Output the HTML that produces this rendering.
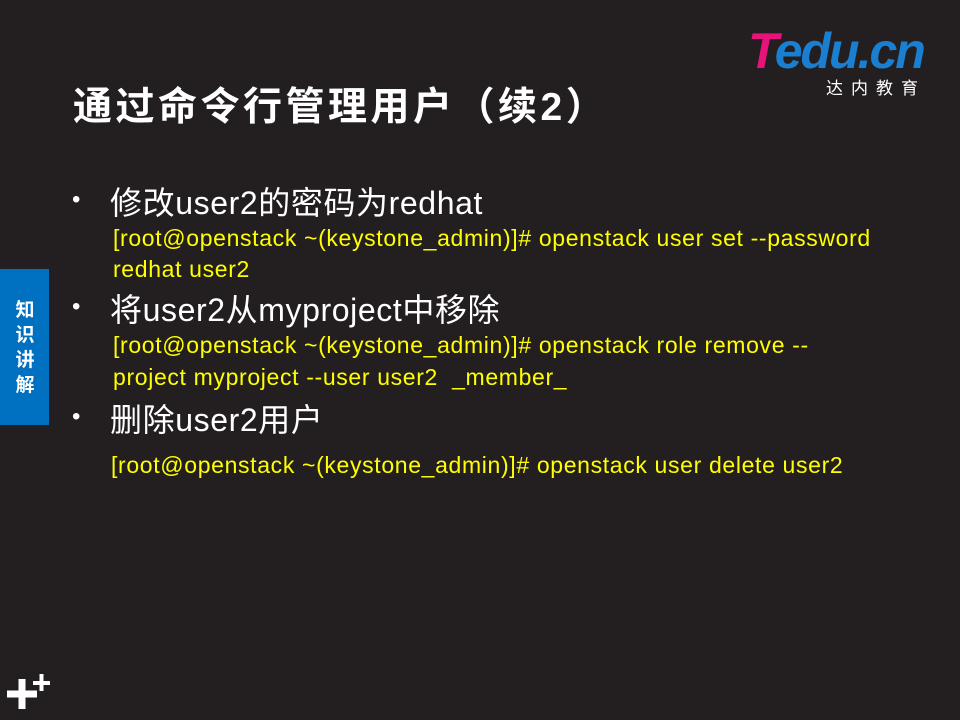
<!DOCTYPE html>
<html><head><meta charset="utf-8"><style>
*{margin:0;padding:0}
body{width:960px;height:720px;background:#231f20;position:relative;overflow:hidden;font-family:"Liberation Sans","Noto Sans CJK SC",sans-serif}
.a{position:absolute;white-space:nowrap}
.t{left:73px;top:76px;font-size:39px;font-weight:bold;color:#fff;letter-spacing:3.5px}
.b{left:110px;font-size:32px;color:#fff;letter-spacing:0.6px}
.d{left:72px;font-size:24px;color:#fff}
.y{left:113px;font-size:23px;color:#ffff00;letter-spacing:0.65px}
</style></head><body>
<div class="a" style="left:748px;top:26px;font-size:50px;font-weight:bold;font-style:italic;letter-spacing:-2px;line-height:50px"><span style="color:#e8137a">T</span><span style="color:#1a7fd0">edu.cn</span></div>
<div class="a" style="left:826px;top:74px;font-size:17px;color:#fff;letter-spacing:8px">达内教育</div>
<div class="a t">通过命令行管理用户（续2）</div>
<div class="a" style="left:0;top:269px;width:49px;height:156px;background:#0070c0"></div>
<div class="a" style="left:13px;top:298px;width:24px;font-size:19px;font-weight:bold;color:#fff;line-height:25px;white-space:normal;text-align:center">知识讲解</div>
<div class="a d" style="top:186px">•</div>
<div class="a b" style="top:178px">修改user2的密码为redhat</div>
<div class="a y" style="top:225px">[root@openstack ~(keystone_admin)]# openstack user set --password</div>
<div class="a y" style="top:256px">redhat user2</div>
<div class="a d" style="top:293px">•</div>
<div class="a b" style="top:285px">将user2从myproject中移除</div>
<div class="a y" style="top:332px">[root@openstack ~(keystone_admin)]# openstack role remove --</div>
<div class="a y" style="top:364px">project myproject --user user2 &nbsp;_member_</div>
<div class="a d" style="top:403px">•</div>
<div class="a b" style="top:395px">删除user2用户</div>
<div class="a y" style="left:111px;top:452px">[root@openstack ~(keystone_admin)]# openstack user delete user2</div>
<svg class="a" style="left:0;top:660px" width="60" height="60">
<path d="M7 694h30M22 679v30" transform="translate(0,-660)" stroke="#fff" stroke-width="7"/>
<path d="M33 683h17M41.5 674v17" transform="translate(0,-660)" stroke="#fff" stroke-width="4"/>
</svg>
</body></html>
